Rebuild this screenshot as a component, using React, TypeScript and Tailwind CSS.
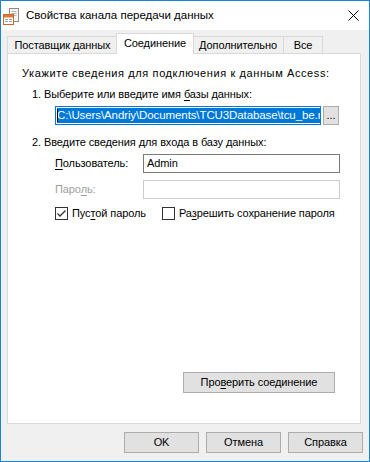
import React from 'react';

const font = { fontFamily: '"Liberation Sans", Arial, sans-serif' };

const Checkbox: React.FC<{ checked?: boolean }> = ({ checked }) => (
  <span className="w-[13px] h-[13px] border border-[#333333] bg-white flex items-center justify-center shrink-0">
    {checked && (
      <svg width="11" height="11" viewBox="0 0 11 11">
        <path d="M1.5 5.5 L4 8 L9.5 2.5" fill="none" stroke="#333333" strokeWidth="1.3" />
      </svg>
    )}
  </span>
);

const WinButton: React.FC<{ className?: string; children: React.ReactNode }> = ({ className, children }) => (
  <div
    className={`h-[21px] bg-[#e1e1e1] border border-[#adadad] flex items-center justify-center text-black ${className ?? ''}`}
  >
    {children}
  </div>
);

const AppIcon = () => (
  <svg width="17" height="17" viewBox="0 0 17 17">
    <rect x="6.5" y="0.5" width="9" height="13" fill="#f6f6f6" stroke="#8c8c8c" />
    <path d="M8.5 3.5h5M8.5 5.5h5M8.5 7.5h5" stroke="#b5b5b5" />
    <rect x="0.5" y="6.5" width="10" height="10" fill="#ffffff" stroke="#c9692b" />
    <rect x="1" y="7" width="9" height="2.5" fill="#e07a35" />
    <path d="M2 11.5h3M6 11.5h3M2 13.5h3M6 13.5h3" stroke="#a0a0a0" />
  </svg>
);

const App: React.FC = () => {
  return (
    <div
      className="w-[370px] h-[462px] border border-[#1883d7] bg-[#f0f0f0] flex flex-col text-black text-[11px] tracking-[-0.1px] leading-[15px] overflow-hidden"
      style={font}
    >
      {/* Title bar */}
      <div className="h-[29px] bg-white flex items-center relative shrink-0">
        <div className="ml-[2px] mt-[2px]">
          <AppIcon />
        </div>
        <span className="ml-[6px] text-[11.5px] tracking-normal">Свойства канала передачи данных</span>
        <svg className="ml-auto mr-[10px]" width="11" height="11" viewBox="0 0 11 11">
          <path d="M0.5 0.5 L10.5 10.5 M10.5 0.5 L0.5 10.5" stroke="#000" strokeWidth="1" />
        </svg>
      </div>

      {/* Tabs */}
      <div className="flex items-end h-[20px] mt-[3px] ml-[6px] relative z-10 shrink-0">
        <div className="w-[110px] h-[17px] border-t border-l border-[#d9d9d9] flex items-center justify-center whitespace-nowrap">
          Поставщик данных
        </div>
        <div className="w-[78px] h-[21px] -mx-[1px] mb-[-1px] bg-white border-t border-x border-[#d9d9d9] flex items-start pt-[2px] justify-center whitespace-nowrap">
          Соединение
        </div>
        <div className="w-[90px] h-[17px] border-t border-[#d9d9d9] flex items-center justify-center whitespace-nowrap">
          Дополнительно
        </div>
        <div className="w-[40px] h-[17px] border-t border-x border-[#d9d9d9] flex items-center justify-center">
          Все
        </div>
      </div>

      {/* Panel */}
      <div className="ml-[6px] w-[354px] h-[371px] bg-white border border-[#d9d9d9] flex flex-col shrink-0">
        <div className="mt-[12px] ml-[14px] tracking-[0.6px]">Укажите сведения для подключения к данным Access:</div>
        <div className="mt-[6px] ml-[24px]">
          1. Выберите или введите имя <u className="underline-offset-2">б</u>азы данных:
        </div>
        <div className="mt-[4px] ml-[47px] flex items-center gap-[2px]">
          <div className="w-[266px] h-[19px] border border-[#0078d7] bg-white flex items-center pl-[1px] overflow-hidden relative">
            <span className="whitespace-nowrap bg-[#0078d7] text-white leading-[15px] text-[11.5px]">
              C:\Users\Andriy\Documents\TCU3Database\tcu_be.mdb
            </span>
            <span className="absolute left-[1px] top-[2px] w-[1px] h-[13px] bg-black" />
          </div>
          <div className="w-[16px] h-[19px] bg-[#e1e1e1] border border-[#adadad] flex items-center justify-center leading-none pb-[1px]">
            ...
          </div>
        </div>

        <div className="mt-[10px] ml-[24px]">2. Введите сведения для входа в базу данных:</div>

        <div className="mt-[4px] ml-[47px] flex items-center">
          <span className="w-[88px]">
            <u className="underline-offset-2">П</u>ользователь:
          </span>
          <div className="w-[197px] h-[19px] border border-[#7a7a7a] bg-white flex items-center pl-[3px]">
            Admin
          </div>
        </div>

        <div className="mt-[7px] ml-[47px] flex items-center">
          <span className="w-[88px] text-[#a0a0a0]">
            Паро<u className="underline-offset-2">л</u>ь:
          </span>
          <div className="w-[197px] h-[19px] border border-[#cccccc] bg-white" />
        </div>

        <div className="mt-[8px] ml-[47px] flex items-center h-[13px]">
          <Checkbox checked />
          <span className="ml-[4px]">
            Пус<u className="underline-offset-2">т</u>ой пароль
          </span>
          <span className="ml-[16px]">
            <Checkbox />
          </span>
          <span className="ml-[4px]">
            Ра<u className="underline-offset-2">з</u>решить сохранение пароля
          </span>
        </div>

        <div className="mt-auto mb-[30px] self-end mr-[25px]">
          <WinButton className="w-[152px] h-[20px]">
            <span>
              Про<u className="underline-offset-2">в</u>ерить соединение
            </span>
          </WinButton>
        </div>
      </div>

      {/* Dialog buttons */}
      <div className="flex justify-end gap-[7px] mt-[8px] mr-[6px]">
        <WinButton className="w-[75px]">OK</WinButton>
        <WinButton className="w-[75px]">Отмена</WinButton>
        <WinButton className="w-[75px]">Справка</WinButton>
      </div>
    </div>
  );
};

export default App;
